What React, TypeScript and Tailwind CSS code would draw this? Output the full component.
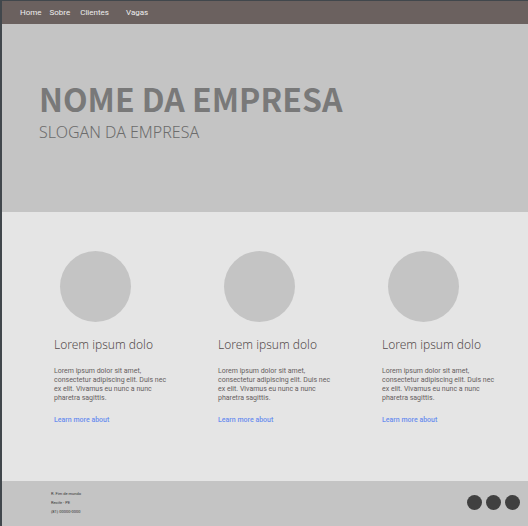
const links = ["Home", "Sobre", "Clientes", "Vagas"];
const gaps = ["", "ml-2", "ml-[10px]", "ml-[17px]"];
const cards = [1, 2, 3];
const address = ["R. Fim de mundo", "Recife - PE", "(81) 00000-0000"];
const socials = ["Facebook", "Instagram", "Twitter"];

export default function App() {
  return (
    <div className="flex min-h-screen flex-col border-l-2 border-t border-[#41474c] bg-[#e5e5e5] font-['Roboto',sans-serif]">
      <nav className="flex h-[23px] items-center bg-[#6b615f] pl-[18px] text-[8px] leading-3 text-[#eeeeee]">
        {links.map((label, i) => (
          <a key={label} href="#" className={gaps[i]}>
            {label}
          </a>
        ))}
      </nav>

      <header className="h-[188px] bg-[#c4c4c4] pl-[37px] pt-14 text-[#797979]">
        <h1 className="whitespace-nowrap font-['Noto_Sans_CJK_JP',sans-serif] text-[32px] font-bold leading-9">
          NOME DA EMPRESA
        </h1>
        <p className="mt-1 whitespace-nowrap font-['Noto_Sans',sans-serif] text-[16px] font-light leading-6 text-[#6c6c6c]">
          SLOGAN DA EMPRESA
        </p>
      </header>

      <main className="grid grow grid-cols-3 gap-11 pb-12 pl-[52px] pr-[26px] pt-[39px]">
        {cards.map((id) => (
          <article key={id}>
            <div className="ml-[6px] size-[71px] rounded-full bg-[#c4c4c4]" />
            <h2 className="mt-[13px] whitespace-nowrap font-['Noto_Sans',sans-serif] text-[12px] font-light leading-5 text-[#574e4e]">
              Lorem ipsum dolo
            </h2>
            <p className="mt-3 whitespace-nowrap text-[7px] leading-[9px] text-[#666060]">
              Lorem ipsum dolor sit amet,
              <br />
              consectetur adipiscing elit. Duis nec
              <br />
              ex elit. Vivamus eu nunc a nunc
              <br />
              pharetra sagittis.
            </p>
            <a href="#" className="mt-[13px] block text-[7px] font-medium leading-[9px] text-[#6b8eee]">
              Learn more about
            </a>
          </article>
        ))}
      </main>

      <footer className="flex h-[45px] items-center justify-between bg-[#c4c4c4] pb-0.5 pl-[49px] pr-2">
        <address className="text-[4px] not-italic leading-[9px] text-[#333333]">
          {address.map((line) => (
            <p key={line}>{line}</p>
          ))}
        </address>
        <div className="flex gap-1">
          {socials.map((name) => (
            <a key={name} href="#" aria-label={name} className="size-[15px] rounded-full bg-[#404040]" />
          ))}
        </div>
      </footer>
    </div>
  );
}
